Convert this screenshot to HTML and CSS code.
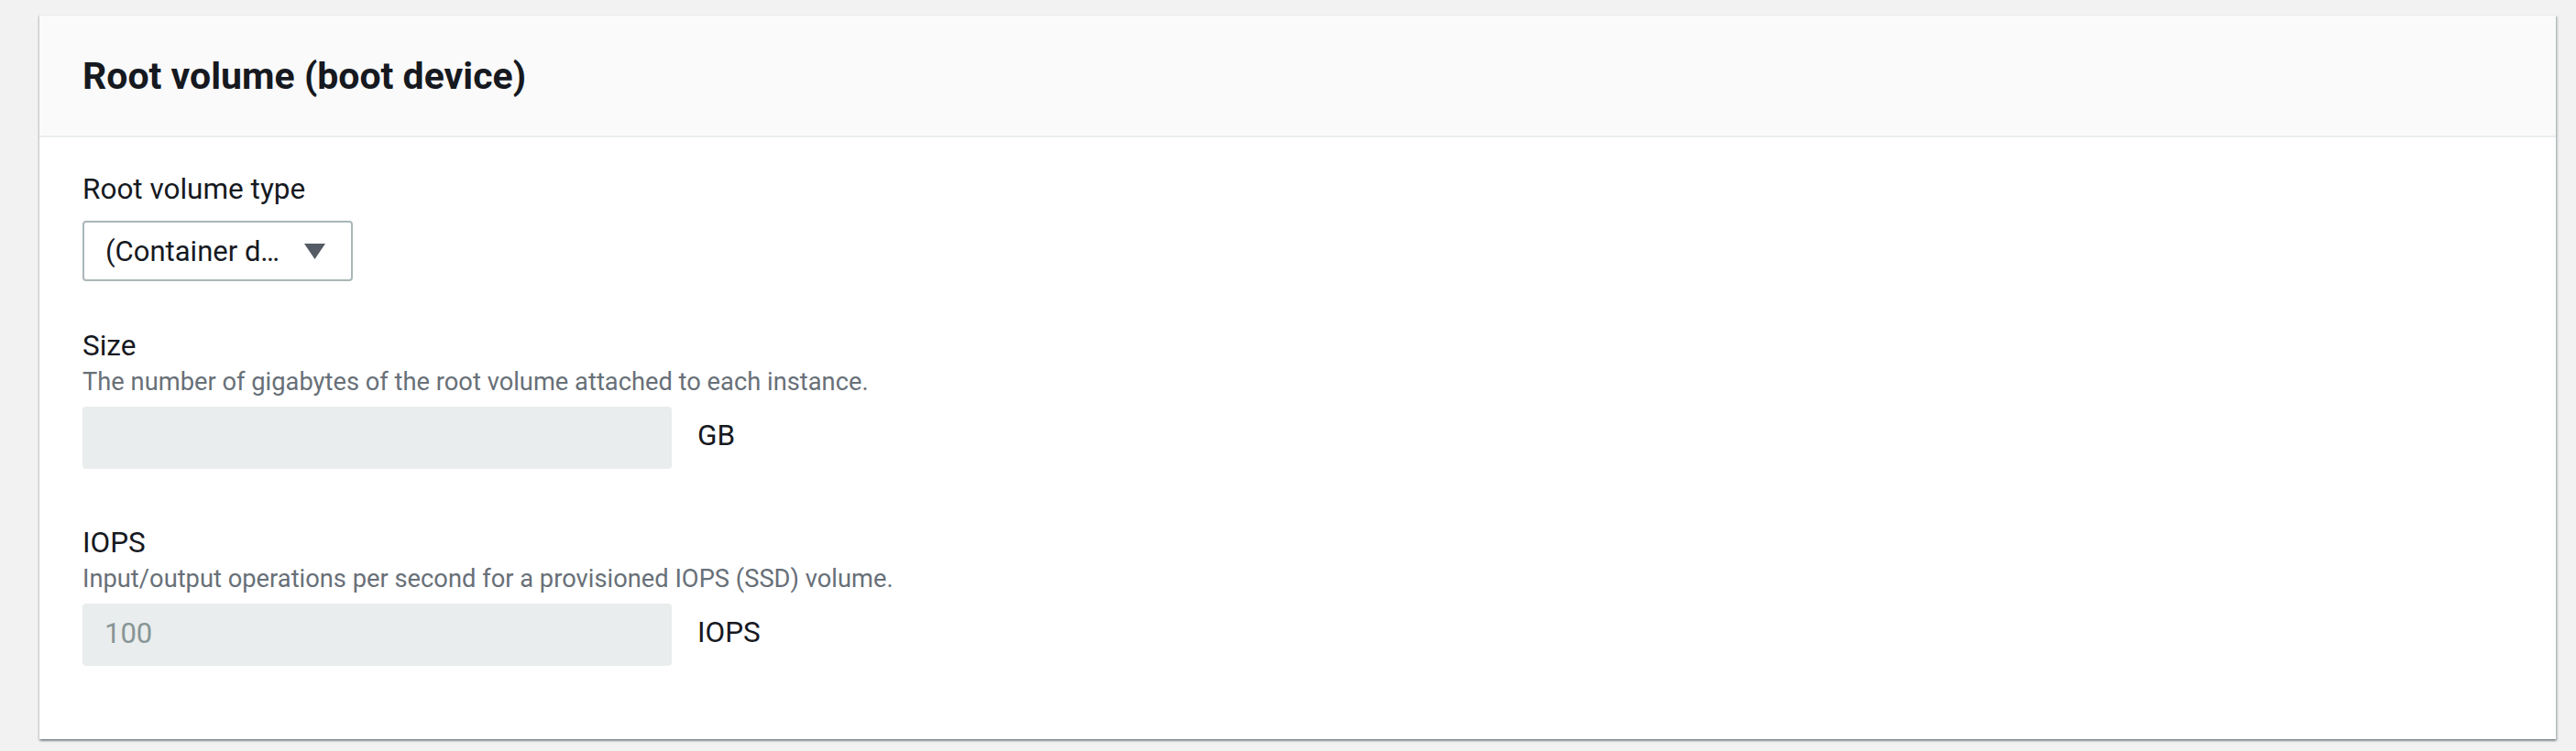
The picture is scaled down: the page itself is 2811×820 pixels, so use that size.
FILE: index.html
```html
<!DOCTYPE html>
<html lang="en">
<head>
<meta charset="utf-8">
<title>Root volume (boot device)</title>
<link rel="stylesheet" href="styles.css">
</head>
<body>
<div class="page">
  <section class="card">
    <header class="card-header">
      <h2 class="card-title">Root volume (boot device)</h2>
    </header>
    <div class="card-body">
      <div class="field field-type">
        <div class="label">Root volume type</div>
        <div class="select">
          <span class="select-text">(Container d…</span>
          <svg class="caret" width="23" height="17" viewBox="0 0 23 17"><path d="M0 0 H23 L11.5 17 Z" fill="#545b64"/></svg>
        </div>
      </div>
      <div class="field field-size">
        <div class="label">Size</div>
        <div class="desc">The number of gigabytes of the root volume attached to each instance.</div>
        <div class="input-row">
          <div class="input"></div>
          <span class="unit">GB</span>
        </div>
      </div>
      <div class="field field-iops">
        <div class="label">IOPS</div>
        <div class="desc">Input/output operations per second for a provisioned IOPS (SSD) volume.</div>
        <div class="input-row">
          <div class="input"><span class="input-value">100</span></div>
          <span class="unit">IOPS</span>
        </div>
      </div>
    </div>
  </section>
</div>
</body>
</html>
```
FILE: styles.css
```css
html, body {
  margin: 0;
  padding: 0;
}
body {
  background: #f2f2f2;
  font-family: Roboto, "Noto Sans", "Liberation Sans", sans-serif;
  color: #16191f;
}
.page {
  padding: 16px 22px 11px 43px;
}
.card {
  background: #ffffff;
  border-top: 1px solid #eaeded;
  box-shadow: 0 2px 2px 0 rgba(0, 28, 36, 0.3), 2px 2px 2px 0 rgba(0, 28, 36, 0.18), -1px 1px 2px 0 rgba(0, 28, 36, 0.12);
}
.card-header {
  background: #fafafa;
  border-bottom: 2px solid #eaeded;
  padding: 0 47px;
  height: 131px;
  display: flex;
  align-items: center;
}
.card-title {
  margin: 0;
  font-size: 41px;
  line-height: 48px;
  font-weight: 700;
  color: #16191f;
}
.card-body {
  padding: 36px 47px 80px 47px;
}
.label {
  font-size: 31.5px;
  line-height: 42px;
  color: #16191f;
}
.desc {
  font-size: 27.3px;
  line-height: 36px;
  color: #687078;
}
.select {
  margin-top: 13px;
  width: 295px;
  height: 66px;
  box-sizing: border-box;
  border: 2px solid #aab7b8;
  border-radius: 4px;
  background: #ffffff;
  display: flex;
  align-items: center;
  padding: 0 28px 0 23px;
  justify-content: space-between;
}
.select-text {
  font-size: 31px;
  color: #16191f;
  white-space: nowrap;
}
.caret {
  display: block;
  flex: none;
}
.field-size {
  margin-top: 50px;
}
.field-iops {
  margin-top: 60px;
}
.input-row {
  margin-top: 9px;
  display: flex;
  align-items: center;
  gap: 28px;
}
.input {
  width: 643px;
  height: 68px;
  box-sizing: border-box;
  background: #eaeded;
  border-radius: 4px;
  display: flex;
  align-items: center;
  padding-left: 24px;
}
.input-value {
  font-size: 31px;
  line-height: 42px;
  margin-bottom: 2px;
  color: #879596;
}
.unit {
  font-size: 31.5px;
  line-height: 42px;
  margin-bottom: 4px;
  color: #16191f;
}
```
